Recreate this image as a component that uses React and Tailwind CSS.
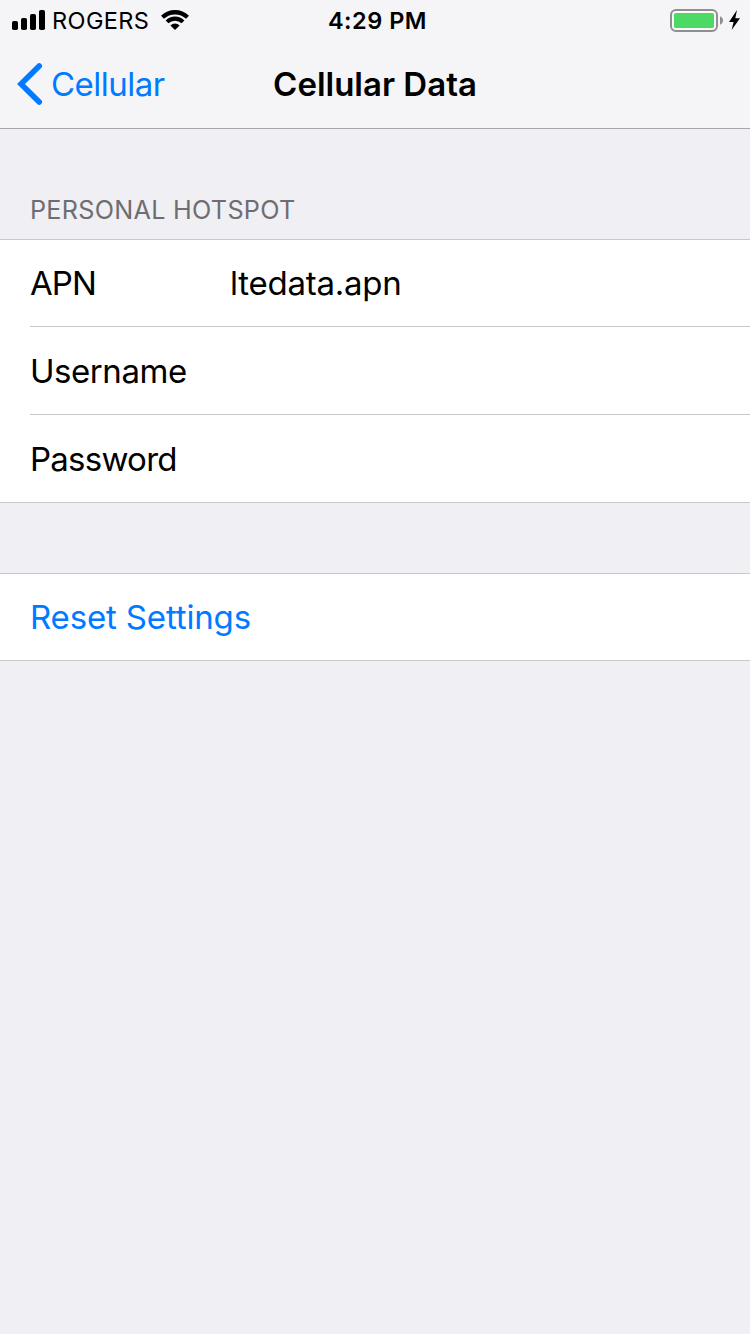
const rows = [
  { label: "APN", value: "ltedata.apn", height: "h-[87px]", tracking: "tracking-[-0.9px]", divider: true },
  { label: "Username", height: "h-[88px]", tracking: "tracking-[-0.45px]", divider: true },
  { label: "Password", height: "h-[87px]", tracking: "tracking-[-0.75px]", divider: false },
];

function Row({ label, value, height, tracking, divider }) {
  return (
    <div className={`flex pl-[30px] text-[33px] leading-[40px] ${height}`}>
      <div className={`flex flex-1 items-center ${divider ? "border-b border-[#c8c7cc]" : ""}`}>
        <span className={`w-[200px] shrink-0 ${tracking}`}>{label}</span>
        {value && <span className="tracking-[-0.25px]">{value}</span>}
      </div>
    </div>
  );
}

function Signal() {
  return (
    <svg className="h-5 w-[33px]" viewBox="0 0 33 20">
      <rect x="0" y="11" width="6" height="9" rx="1.8" />
      <rect x="9" y="8" width="6" height="12" rx="1.8" />
      <rect x="18" y="4" width="6" height="16" rx="1.8" />
      <rect x="27" y="0" width="6" height="20" rx="1.8" />
    </svg>
  );
}

function Wifi() {
  return (
    <svg className="ml-3 h-5 w-7" viewBox="0 0 28 20">
      <path d="M14 20l-4.6-4.6a6.4 6.4 0 0 1 9.2 0z" />
      <path d="M6 11.9a11.5 11.5 0 0 1 16 0" fill="none" stroke="#000" strokeWidth="4.1" />
      <path d="M1.5 7.2a18.2 18.2 0 0 1 25 0" fill="none" stroke="#000" strokeWidth="4.3" />
    </svg>
  );
}

function Battery() {
  return (
    <svg className="h-6 w-[72px]" viewBox="0 0 72 24">
      <rect x="1" y="2" width="46" height="21" rx="5" fill="#fff" fillOpacity="0.5" stroke="#8f8f91" strokeWidth="2" />
      <rect x="4" y="5" width="40" height="15" rx="1.7" fill="#4cd964" />
      <path d="M50 8.3c4 1.2 4 7.2 0 8.4z" fill="#8f8f91" />
      <path d="M67 2L59 14h4.6L61.6 22 70 10.2h-4.7z" />
    </svg>
  );
}

export default function App() {
  return (
    <div className="h-[1334px] w-[750px] overflow-hidden bg-[#efeff4] font-['Inter',sans-serif] text-black">
      <header className="h-[129px] border-b border-[#a7a7ab] bg-[#f5f5f7]">
        <div className="grid h-10 grid-cols-3 items-center">
          <div className="flex items-center pl-3">
            <Signal />
            <span className="ml-[7px] w-[97px] pt-[2px] text-[23.5px] leading-[38px] tracking-[0.4px]">ROGERS</span>
            <Wifi />
          </div>
          <div className="pt-[2px] pl-[5px] text-center text-[23.5px] leading-[38px] font-semibold tracking-[0.5px] whitespace-nowrap">4:29 PM</div>
          <div className="justify-self-end pr-2"><Battery /></div>
        </div>
        <div className="grid h-[88px] grid-cols-3 items-center text-[33px]">
          <div className="flex items-center pl-[17px] text-[#007aff]">
            <svg className="h-[42px] w-[26px]" viewBox="0 0 26 42" fill="none" stroke="currentColor" strokeWidth="5.6" strokeLinecap="round">
              <path d="M22.2 3L4 21l18.2 18" strokeLinejoin="miter" />
            </svg>
            <span className="ml-2 pt-[2px] tracking-[-0.5px]">Cellular</span>
          </div>
          <h1 className="pt-[2px] text-center font-semibold whitespace-nowrap">Cellular Data</h1>
        </div>
      </header>
      <h2 className="h-[110px] pt-[61px] pl-[30px] text-[25.2px] leading-[40px] tracking-[0.28px] text-[#6d6d72]">PERSONAL HOTSPOT</h2>
      <section className="border-y border-[#c8c7cc] bg-white">
        {rows.map((row) => <Row key={row.label} {...row} />)}
      </section>
      <section className="mt-[70px] flex h-[88px] items-center border-y border-[#c8c7cc] bg-white pt-[2px] pl-[30px] text-[33px] tracking-[-0.15px] text-[#007aff]">Reset Settings</section>
    </div>
  );
}
